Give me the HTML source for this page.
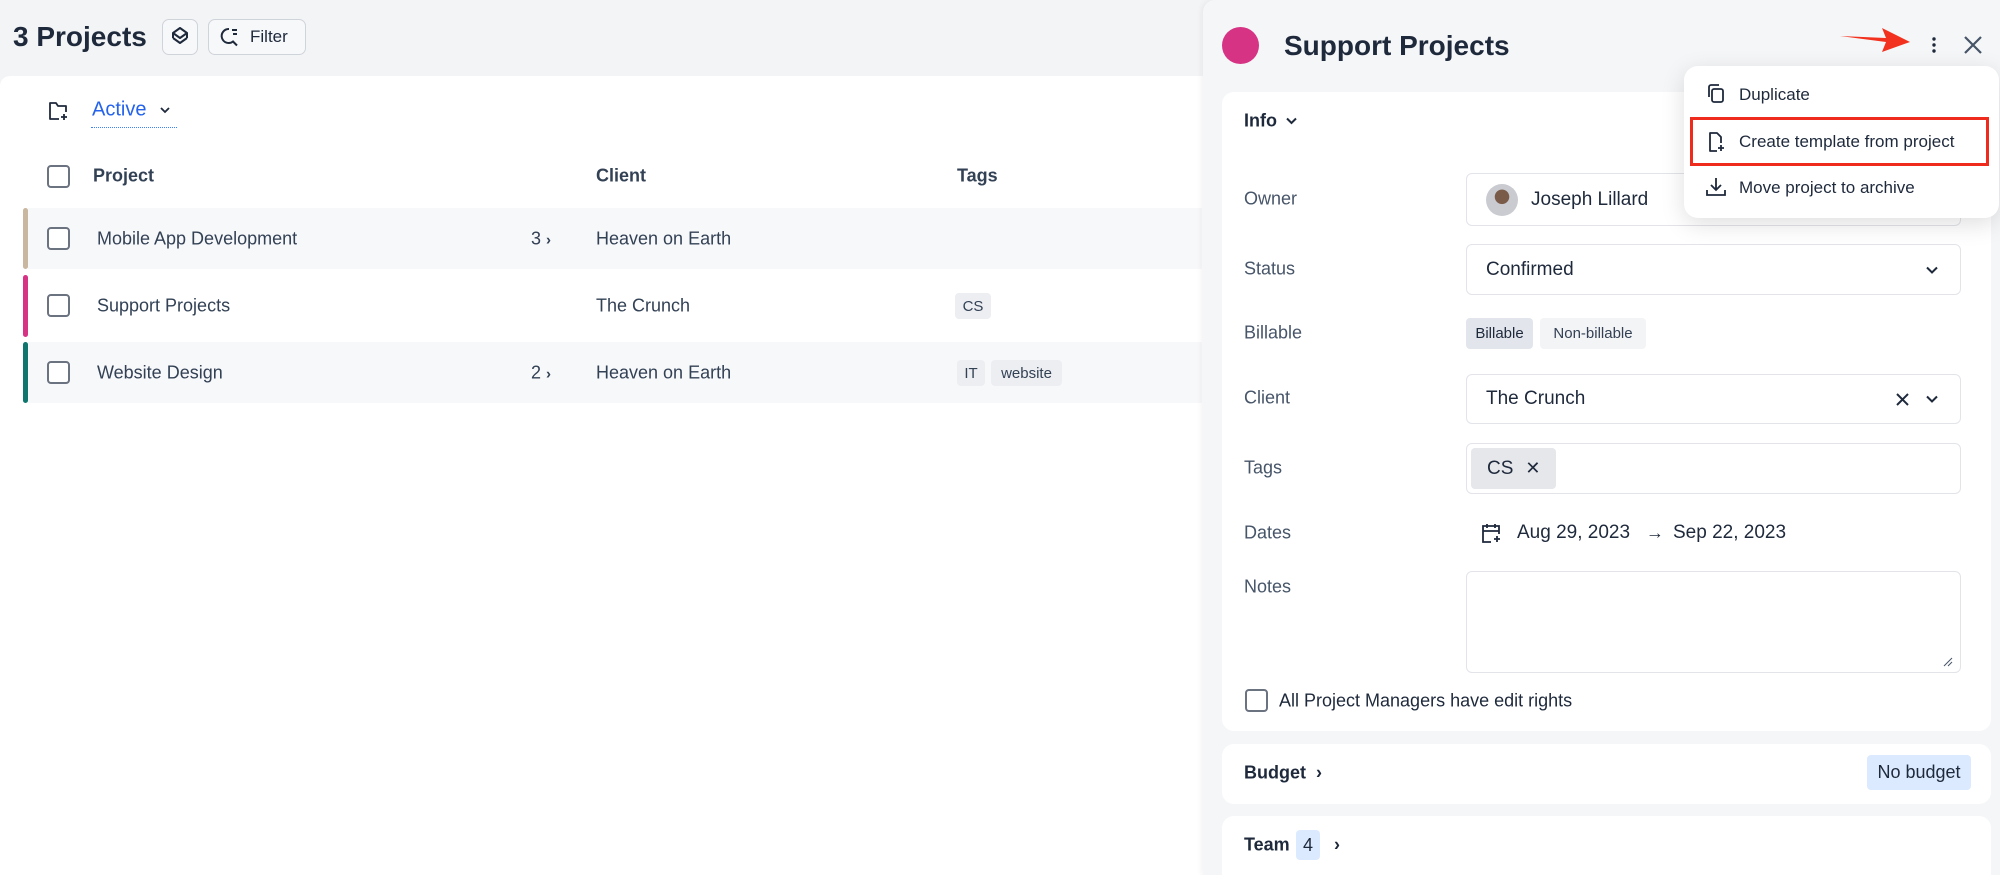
<!DOCTYPE html>
<html style="overflow:hidden;height:875px"><head><meta charset="utf-8"><style>
*{box-sizing:border-box;margin:0;padding:0}
body{width:2000px;height:875px;overflow:hidden;background:#f3f4f6;font-family:"Liberation Sans",sans-serif;color:#1e293b;position:relative}
.a{position:absolute}
.t{position:absolute;white-space:nowrap;transform:translateY(-50%)}
.cb{position:absolute;width:23px;height:23px;border:2px solid #6b7280;border-radius:4px;background:#fff}
.row{position:absolute;left:28px;width:1174px}
.bar{position:absolute;left:23px;width:5px;border-radius:3px}
.tag{position:absolute;background:#eceef2;border-radius:4px;font-size:15px;color:#334155;display:flex;align-items:center;justify-content:center}
.lbl{position:absolute;left:1244px;font-size:18px;color:#475569;transform:translateY(-50%)}
.box{position:absolute;left:1466px;width:495px;border:1.5px solid #e2e4ea;border-radius:6px;background:#fff}
.card{position:absolute;left:1222px;width:769px;background:#fff;border-radius:12px}
</style></head><body>
<div class="t" style="left:13px;top:37px;font-size:28px;font-weight:600;color:#1e293b">3 Projects</div>
<div class="a" style="left:162px;top:19px;width:36px;height:36px;border:1.5px solid #cfd3da;border-radius:7px;background:#f7f8fa"></div>
<svg class="a" style="left:168px;top:25px" width="24" height="24" viewBox="0 0 24 24" fill="none" stroke="#1e293b" stroke-width="2" stroke-linejoin="round"><path d="M12 3l7 5-7 5-7-5z"/><path d="M5 13l7 5 7-5"/><path d="M5 8v5M19 8v5"/></svg>
<div class="a" style="left:208px;top:19px;width:98px;height:36px;border:1.5px solid #cfd3da;border-radius:7px;background:#f7f8fa"></div>
<svg class="a" style="left:218px;top:26px" width="22" height="22" viewBox="0 0 22 22" fill="none" stroke="#1e293b" stroke-width="2"><path d="M11 3a7 7 0 1 0 4 12.5l4 4"/><path d="M14 4h5M15 8h4"/></svg>
<div class="t" style="left:250px;top:37px;font-size:17px;color:#1e293b">Filter</div>

<div class="a" style="left:0;top:76px;width:1210px;height:799px;background:#fff;border-radius:10px 0 0 0"></div>
<svg class="a" style="left:46px;top:99px" width="24" height="24" viewBox="0 0 24 24" fill="none" stroke="#1e293b" stroke-width="1.8" stroke-linejoin="round"><path d="M13 20H4V4h6l2 3h8v6"/><path d="M18 15v6M15 18h6"/></svg>
<div class="t" style="left:92px;top:110px;font-size:20px;color:#2563eb">Active</div>
<svg class="a" style="left:160px;top:106px" width="10" height="8" viewBox="0 0 10 8" fill="none" stroke="#1e293b" stroke-width="1.8"><path d="M1 2l4 4 4-4"/></svg>
<div class="a" style="left:91px;top:127px;width:86px;border-top:1.5px dotted #3b82f6"></div>

<div class="cb" style="left:47px;top:165px"></div>
<div class="t" style="left:93px;top:176px;font-size:18px;font-weight:600;color:#334155">Project</div>
<div class="t" style="left:596px;top:176px;font-size:18px;font-weight:600;color:#334155">Client</div>
<div class="t" style="left:957px;top:176px;font-size:18px;font-weight:600;color:#334155">Tags</div>

<div class="row" style="top:208px;height:61px;background:#f7f8fa"></div>
<div class="bar" style="top:208px;height:61px;background:#c9b79f"></div>
<div class="cb" style="left:47px;top:227px"></div>
<div class="t" style="left:97px;top:239px;font-size:18px;color:#334155">Mobile App Development</div>
<div class="t" style="left:531px;top:239px;font-size:18px;color:#334155">3 <span style="font-size:15px;font-weight:bold">›</span></div>
<div class="t" style="left:596px;top:239px;font-size:18px;color:#334155">Heaven on Earth</div>

<div class="bar" style="top:275px;height:62px;background:#d63384"></div>
<div class="cb" style="left:47px;top:294px"></div>
<div class="t" style="left:97px;top:306px;font-size:18px;color:#334155">Support Projects</div>
<div class="t" style="left:596px;top:306px;font-size:18px;color:#334155">The Crunch</div>
<div class="tag" style="left:955px;top:293px;width:36px;height:26px">CS</div>

<div class="row" style="top:342px;height:61px;background:#f7f8fa"></div>
<div class="bar" style="top:342px;height:61px;background:#0f766e"></div>
<div class="cb" style="left:47px;top:361px"></div>
<div class="t" style="left:97px;top:373px;font-size:18px;color:#334155">Website Design</div>
<div class="t" style="left:531px;top:373px;font-size:18px;color:#334155">2 <span style="font-size:15px;font-weight:bold">›</span></div>
<div class="t" style="left:596px;top:373px;font-size:18px;color:#334155">Heaven on Earth</div>
<div class="tag" style="left:957px;top:360px;width:28px;height:26px">IT</div>
<div class="tag" style="left:991px;top:360px;width:71px;height:26px">website</div>

<div class="a" style="left:1203px;top:0;width:797px;height:875px;background:#f5f6f8;border-radius:12px 0 0 0;box-shadow:-2px 0 6px rgba(0,0,0,.05)"></div>
<div class="a" style="left:1222px;top:27px;width:37px;height:37px;border-radius:50%;background:#d63384"></div>
<div class="t" style="left:1284px;top:46px;font-size:28px;font-weight:600;color:#1e293b">Support Projects</div>
<svg class="a" style="left:1838px;top:24px" width="74" height="30" viewBox="0 0 74 30"><path d="M2 12 L48 14 L44 4 L72 18 L44 28 L48 18 Z" fill="#f2321e"/></svg>
<svg class="a" style="left:1929px;top:35px" width="10" height="20" viewBox="0 0 10 20" fill="#1e293b"><circle cx="5" cy="4" r="1.7"/><circle cx="5" cy="10" r="1.7"/><circle cx="5" cy="16" r="1.7"/></svg>
<svg class="a" style="left:1963px;top:35px" width="20" height="20" viewBox="0 0 20 20" stroke="#475569" stroke-width="2.2"><path d="M2 2l16 16M18 2L2 18"/></svg>

<div class="card" style="top:92px;height:639px"></div>
<div class="t" style="left:1244px;top:121px;font-size:18px;font-weight:600;color:#1e293b">Info</div>
<svg class="a" style="left:1286px;top:117px" width="11" height="8" viewBox="0 0 11 8" fill="none" stroke="#1e293b" stroke-width="2"><path d="M1 1.5l4.5 4.5 4.5-4.5"/></svg>

<div class="lbl" style="top:199px">Owner</div>
<div class="box" style="top:173px;height:53px"></div>
<div class="a" style="left:1486px;top:184px;width:32px;height:32px;border-radius:50%;background:radial-gradient(circle at 50% 40%,#7a5a48 0 28%,#c9cbd0 30% 100%)"></div>
<div class="t" style="left:1531px;top:200px;font-size:19px;color:#1e293b">Joseph Lillard</div>

<div class="lbl" style="top:269px">Status</div>
<div class="box" style="top:244px;height:51px"></div>
<div class="t" style="left:1486px;top:270px;font-size:19px;color:#1e293b">Confirmed</div>
<svg class="a" style="left:1926px;top:266px" width="12" height="8" viewBox="0 0 12 8" fill="none" stroke="#1e293b" stroke-width="2"><path d="M1 1.5l5 5 5-5"/></svg>

<div class="lbl" style="top:333px">Billable</div>
<div class="tag" style="left:1466px;top:318px;width:67px;height:31px;background:#e2e5ec;font-size:15px;color:#1e293b">Billable</div>
<div class="tag" style="left:1540px;top:318px;width:106px;height:31px;background:#f3f4f6;font-size:15px;color:#334155">Non-billable</div>

<div class="lbl" style="top:398px">Client</div>
<div class="box" style="top:374px;height:50px"></div>
<div class="t" style="left:1486px;top:399px;font-size:19px;color:#1e293b">The Crunch</div>
<svg class="a" style="left:1896px;top:393px" width="13" height="13" viewBox="0 0 13 13" stroke="#1e293b" stroke-width="2"><path d="M1 1l11 11M12 1L1 12"/></svg>
<svg class="a" style="left:1926px;top:395px" width="12" height="8" viewBox="0 0 12 8" fill="none" stroke="#1e293b" stroke-width="2"><path d="M1 1.5l5 5 5-5"/></svg>

<div class="lbl" style="top:468px">Tags</div>
<div class="box" style="top:443px;height:51px"></div>
<div class="tag" style="left:1471px;top:448px;width:85px;height:41px;background:#e5e7eb;font-size:19px;color:#1e293b;justify-content:flex-start;padding-left:16px">CS<span style="margin-left:12px;font-size:18px">✕</span></div>

<div class="lbl" style="top:533px">Dates</div>
<svg class="a" style="left:1479px;top:521px" width="24" height="24" viewBox="0 0 24 24" fill="none" stroke="#1e293b" stroke-width="1.8"><path d="M12 21H4V5h16v8M4 10h16M8 3v4M16 3v4M18 15v6M15 18h6"/></svg>
<div class="t" style="left:1517px;top:533px;font-size:19px;color:#1e293b">Aug 29, 2023</div>
<div class="t" style="left:1646px;top:533px;font-size:18px;color:#1e293b">→</div>
<div class="t" style="left:1673px;top:533px;font-size:19px;color:#1e293b">Sep 22, 2023</div>

<div class="lbl" style="top:587px">Notes</div>
<div class="box" style="top:571px;height:102px"></div>
<svg class="a" style="left:1943px;top:657px" width="10" height="10" viewBox="0 0 10 10" stroke="#475569" stroke-width="1"><path d="M9 1L1 9M9 5L5 9"/></svg>

<div class="cb" style="left:1245px;top:689px"></div>
<div class="t" style="left:1279px;top:701px;font-size:18px;color:#1e293b">All Project Managers have edit rights</div>

<div class="card" style="top:744px;height:60px"></div>
<div class="t" style="left:1244px;top:773px;font-size:18px;font-weight:600;color:#1e293b">Budget</div>
<div class="t" style="left:1316px;top:773px;font-size:18px;font-weight:bold;color:#1e293b">›</div>
<div class="tag" style="left:1867px;top:755px;width:104px;height:35px;background:#dbeafe;font-size:18px;color:#1e293b">No budget</div>

<div class="card" style="top:816px;height:59px;border-radius:12px 12px 0 0"></div>
<div class="t" style="left:1244px;top:845px;font-size:18px;font-weight:600;color:#1e293b">Team</div>
<div class="tag" style="left:1296px;top:830px;width:24px;height:30px;background:#dbeafe;font-size:18px;color:#1e293b">4</div>
<div class="t" style="left:1334px;top:845px;font-size:18px;font-weight:bold;color:#1e293b">›</div>

<div class="a" style="left:1684px;top:66px;width:315px;height:152px;background:#fff;border-radius:14px;box-shadow:0 6px 24px rgba(0,0,0,.13)"></div>
<svg class="a" style="left:1706px;top:83px" width="20" height="22" viewBox="0 0 20 22" fill="none" stroke="#1e293b" stroke-width="1.8"><rect x="6" y="6" width="11" height="13" rx="2"/><path d="M3 14V4a2 2 0 0 1 2-2h8"/></svg>
<div class="t" style="left:1739px;top:95px;font-size:17px;color:#1e293b">Duplicate</div>
<div class="a" style="left:1690px;top:117px;width:299px;height:49px;border:3px solid #ef2b1d"></div>
<svg class="a" style="left:1706px;top:131px" width="20" height="22" viewBox="0 0 20 22" fill="none" stroke="#1e293b" stroke-width="1.8" stroke-linejoin="round"><path d="M11 20H4V2h7l4 4v6"/><path d="M15 14v6M12 17h6"/></svg>
<div class="t" style="left:1739px;top:142px;font-size:17px;color:#1e293b">Create template from project</div>
<svg class="a" style="left:1705px;top:176px" width="22" height="22" viewBox="0 0 22 22" fill="none" stroke="#1e293b" stroke-width="1.8"><path d="M11 2v12M6 9l5 5 5-5M2 14v5h18v-5"/></svg>
<div class="t" style="left:1739px;top:188px;font-size:17px;color:#1e293b">Move project to archive</div>
</body></html>
